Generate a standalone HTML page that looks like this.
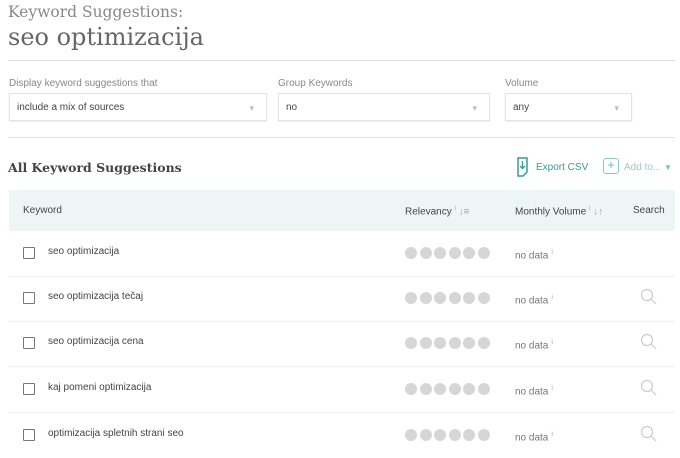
<!DOCTYPE html><html><head><style>
body{margin:0;width:680px;height:455px;background:#fff;font-family:"Liberation Sans",sans-serif;position:relative;overflow:hidden;color:#555}
.a{position:absolute}
.sel{position:absolute;top:93px;height:28px;border:1px solid #e3e3e3;box-shadow:0 1px 2px #eee;font-size:10px;color:#444;line-height:28px;padding-left:7px;box-sizing:border-box}
.sel:after{content:"▾";position:absolute;right:12px;top:0;color:#bbb;font-size:9px}
.lbl{position:absolute;top:78px;font-size:10px;color:#888}
.row{position:absolute;left:9px;width:666px;height:45px;border-bottom:1px solid #f0f0f0}
.cb{position:absolute;left:14px;top:16px;width:10px;height:10px;border:1px solid #777;border-radius:1px}
.kw{position:absolute;left:39px;top:15px;font-size:10px;color:#444}
.dots{position:absolute;left:396px;top:15px}
.dots i{display:inline-block;width:12px;height:12px;border-radius:50%;background:#d6d6d6;margin-right:2.6px}
.nd{position:absolute;left:506px;top:18px;font-size:10px;color:#777}
.nd sup{font-size:7px;color:#aaa;margin-left:3px}
.mg{position:absolute;left:631px;top:12px}
</style></head><body>
<div class="a" style="left:8px;top:3px;font-family:'DejaVu Serif',serif;font-size:15.5px;color:#888">Keyword Suggestions:</div>
<div class="a" style="left:8px;top:23px;font-family:'DejaVu Serif',serif;font-size:24px;color:#666">seo optimizacija</div>
<div class="a" style="left:8px;top:60px;width:667px;height:1px;background:#ddd"></div>
<div class="lbl" style="left:9px">Display keyword suggestions that</div>
<div class="lbl" style="left:278px">Group Keywords</div>
<div class="lbl" style="left:505px">Volume</div>
<div class="sel" style="left:9px;width:258px">include a mix of sources</div>
<div class="sel" style="left:278px;width:212px">no</div>
<div class="sel" style="left:505px;width:127px">any</div>
<div class="a" style="left:8px;top:137px;width:667px;height:1px;background:#e2e2e2"></div>
<div class="a" style="left:8px;top:160px;font-family:'DejaVu Serif',serif;font-weight:bold;font-size:12.5px;color:#444">All Keyword Suggestions</div>
<svg class="a" style="left:516px;top:157px" width="14" height="20"><path d="M2 1h9v14l-4 4H2z" fill="none" stroke="#3a9a94" stroke-width="1.5"/><path d="M6.5 4v7M4 9l2.5 2.5L9 9" fill="none" stroke="#3a9a94" stroke-width="1.3"/></svg>
<div class="a" style="left:536px;top:162px;font-size:10px;color:#3a9a94">Export CSV</div>
<div class="a" style="left:603px;top:158px;width:16px;height:16px;border:1.5px solid #8cc8c3;border-radius:3px;box-sizing:border-box;color:#5bb;font-size:12px;line-height:13px;text-align:center">+</div>
<div class="a" style="left:624px;top:162px;font-size:10px;color:#9cc">Add to... <span style="color:#7bb;font-size:8px">▼</span></div>
<div class="a" style="left:9px;top:190px;width:666px;height:41px;background:#eef6f5"></div>
<div class="a" style="left:23px;top:205px;font-size:10px;color:#444">Keyword</div>
<div class="a" style="left:405px;top:206px;font-size:10px;color:#444">Relevancy <sup style="font-size:6px;color:#999">i</sup> <span style="color:#aaa">↓≡</span></div>
<div class="a" style="left:515px;top:206px;font-size:10px;color:#444">Monthly Volume <sup style="font-size:6px;color:#999">i</sup> <span style="color:#aaa">↓↑</span></div>
<div class="a" style="left:633px;top:205px;font-size:10px;color:#444">Search</div>

<div class="row" style="top:231px"><div class="cb"></div><div class="kw">seo optimizacija</div><div class="dots"><i></i><i></i><i></i><i></i><i></i><i></i></div><div class="nd">no data<sup>i</sup></div></div>
<div class="row" style="top:276px"><div class="cb"></div><div class="kw">seo optimizacija tečaj</div><div class="dots"><i></i><i></i><i></i><i></i><i></i><i></i></div><div class="nd">no data<sup>i</sup></div><svg class="mg" width="18" height="18"><circle cx="7" cy="7" r="5.5" fill="none" stroke="#ccc" stroke-width="1.2"/><path d="M11 11l5 5" stroke="#ccc" stroke-width="1.2"/></svg></div>
<div class="row" style="top:321px"><div class="cb"></div><div class="kw">seo optimizacija cena</div><div class="dots"><i></i><i></i><i></i><i></i><i></i><i></i></div><div class="nd">no data<sup>i</sup></div><svg class="mg" width="18" height="18"><circle cx="7" cy="7" r="5.5" fill="none" stroke="#ccc" stroke-width="1.2"/><path d="M11 11l5 5" stroke="#ccc" stroke-width="1.2"/></svg></div>
<div class="row" style="top:367px"><div class="cb"></div><div class="kw">kaj pomeni optimizacija</div><div class="dots"><i></i><i></i><i></i><i></i><i></i><i></i></div><div class="nd">no data<sup>i</sup></div><svg class="mg" width="18" height="18"><circle cx="7" cy="7" r="5.5" fill="none" stroke="#ccc" stroke-width="1.2"/><path d="M11 11l5 5" stroke="#ccc" stroke-width="1.2"/></svg></div>
<div class="row" style="top:413px;border:none"><div class="cb"></div><div class="kw">optimizacija spletnih strani seo</div><div class="dots"><i></i><i></i><i></i><i></i><i></i><i></i></div><div class="nd">no data<sup>i</sup></div><svg class="mg" width="18" height="18"><circle cx="7" cy="7" r="5.5" fill="none" stroke="#ccc" stroke-width="1.2"/><path d="M11 11l5 5" stroke="#ccc" stroke-width="1.2"/></svg></div>
</body></html>
